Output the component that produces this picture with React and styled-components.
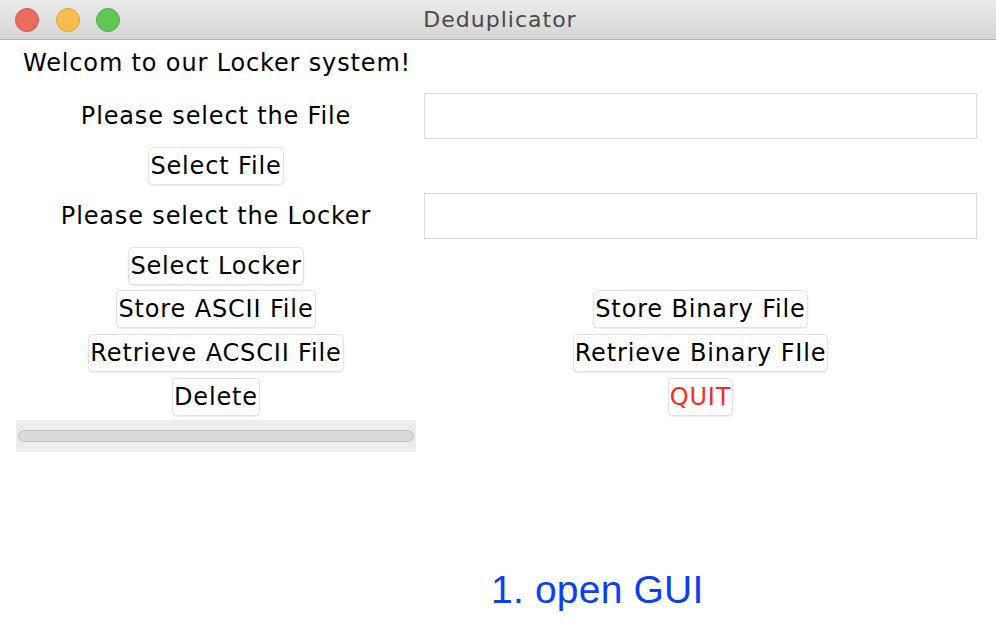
import React from 'react';
import styled, { createGlobalStyle } from 'styled-components';

const Global = createGlobalStyle`
  html, body { margin: 0; padding: 0; background: #fff; }
  body { font-family: "DejaVu Sans", Verdana, sans-serif; }
`;

const Window = styled.div`
  width: 996px; height: 640px; background: #fff;
  display: flex; flex-direction: column;
  overflow: hidden;
`;
const TitleBar = styled.div`
  height: 39px; flex-shrink: 0;
  display: flex; align-items: center;
  padding-left: 15px;
  background: linear-gradient(#ebebeb, #d5d5d5);
  border-bottom: 1px solid #b3b3b3;
`;
const Lights = styled.div`display: flex; gap: 16.5px;`;
const Light = styled.span`
  width: 24px; height: 24px; border-radius: 50%;
  background: ${p => p.$bg};
  border: 1px solid ${p => p.$edge};
  box-sizing: border-box;
`;
const Title = styled.div`
  flex: 1; text-align: center; margin-left: -116px;
  font-size: 22px; letter-spacing: 1px; color: #4a4a4a;
`;
const Body = styled.div`
  display: flex; flex-direction: column;
  padding: 0 19px 0 16px;
  font-size: 24px; color: #000;
  letter-spacing: 0.85px;
`;
const Welcome = styled.div`
  height: 46px; line-height: 46px; padding-left: 7px;
`;
const Row = styled.div`
  display: grid;
  grid-template-columns: 400px 553px;
  column-gap: 8px;
  align-items: center;
  margin-top: ${p => p.$top || 0}px;
`;
const Cell = styled.div`
  display: flex; justify-content: center; align-items: center;
`;
const Label = styled.div`text-align: center; white-space: nowrap;`;
const Field = styled.div`
  height: 46px; box-sizing: border-box;
  border: 1px solid #dcdcdc; background: #fff;
`;
const Button = styled.button`
  font: inherit; font-size: 24px; letter-spacing: inherit;
  color: ${p => p.$danger ? '#ff2a1f' : '#000'};
  height: 38px; padding: 0 1px;
  background: #fff; white-space: nowrap;
  border: 1px solid #e2e2e2; border-radius: 5px;
  box-shadow: 0 1px 1px rgba(0,0,0,0.08);
`;
const ProgressWrap = styled.div`
  width: 400px; height: 32px; background: #ececec;
  display: flex; align-items: center; justify-content: center;
`;
const Track = styled.div`
  width: 396px; height: 12px; box-sizing: border-box;
  border: 1px solid #c4c4c4; border-radius: 7px;
  background: #dadada;
`;
const Caption = styled.div`
  margin-top: 116px; padding-left: 475px;
  font-family: "Liberation Sans", Arial, sans-serif;
  font-size: 39px; letter-spacing: 0.2px; color: #0b3ef6;
`;

export default function App() {
  return (
    <Window>
      <Global />
      <TitleBar>
        <Lights>
          <Light $bg="#ee6a5f" $edge="#d6554b" />
          <Light $bg="#f6be4f" $edge="#dea23a" />
          <Light $bg="#62c655" $edge="#4fae43" />
        </Lights>
        <Title>Deduplicator</Title>
      </TitleBar>
      <Body>
        <Welcome>Welcom to our Locker system!</Welcome>
        <Row $top={7}>
          <Label>Please select the File</Label>
          <Field />
        </Row>
        <Row $top={8}>
          <Cell><Button>Select File</Button></Cell>
        </Row>
        <Row $top={8}>
          <Label>Please select the Locker</Label>
          <Field />
        </Row>
        <Row $top={8}>
          <Cell><Button>Select Locker</Button></Cell>
        </Row>
        <Row $top={5}>
          <Cell><Button>Store ASCII File</Button></Cell>
          <Cell><Button>Store Binary File</Button></Cell>
        </Row>
        <Row $top={6}>
          <Cell><Button>Retrieve ACSCII File</Button></Cell>
          <Cell><Button>Retrieve Binary FIle</Button></Cell>
        </Row>
        <Row $top={6}>
          <Cell><Button>Delete</Button></Cell>
          <Cell><Button $danger>QUIT</Button></Cell>
        </Row>
        <Row $top={4}>
          <ProgressWrap><Track /></ProgressWrap>
        </Row>
        <Caption>1. open GUI</Caption>
      </Body>
    </Window>
  );
}
